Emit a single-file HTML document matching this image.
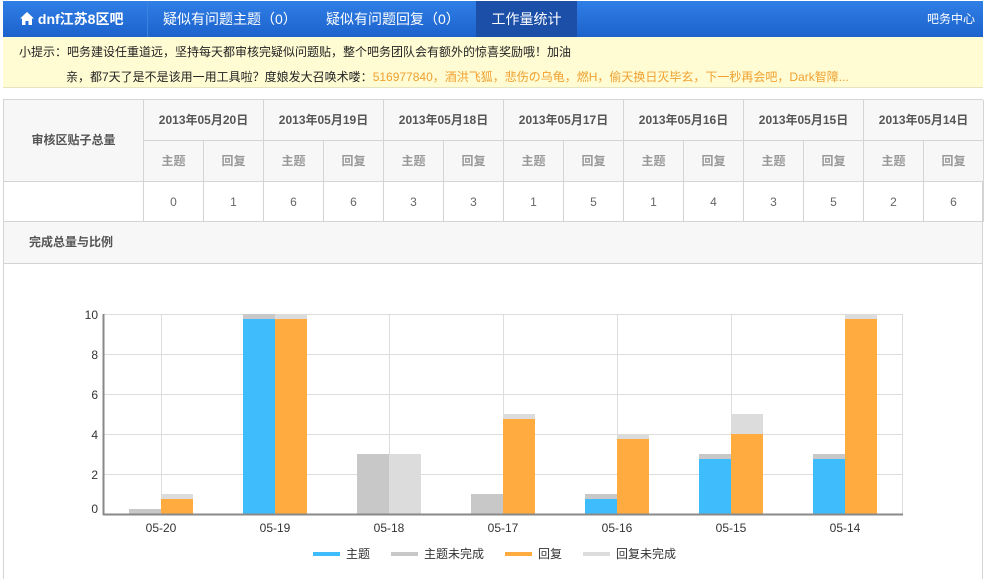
<!DOCTYPE html>
<html><head><meta charset="utf-8">
<style>
*{margin:0;padding:0;box-sizing:border-box}
body{width:985px;height:579px;background:#fff;font-family:"Liberation Sans","Noto Sans CJK SC",sans-serif;font-size:12px;color:#333;position:relative;overflow:hidden}
.nav{position:absolute;left:3px;top:1px;width:980px;height:36px;background:linear-gradient(#2f7fe6,#1d62cc);color:#fff}
.nav div{position:absolute;top:0;height:36px;line-height:36px;font-size:14px}
.tip{position:absolute;left:3px;top:37px;width:980px;height:51px;background:#fffcd3;border-bottom:1px solid #e6e3c0;font-size:12px;color:#222}
.tip p{position:absolute;white-space:nowrap}
.o{color:#f0a030}
.c{position:absolute;border-right:1px solid #d4d4d4;border-bottom:1px solid #d4d4d4;text-align:center;font-weight:bold;color:#555}
.g{background:#f7f7f7}
.n{font-weight:normal;color:#666}
</style></head><body>
<div class="nav">
<div style="left:0;width:145px;border-right:1px solid #3a84dc;font-weight:bold;padding-left:17px"><svg width="14" height="13" viewBox="0 0 14 13" style="vertical-align:-1px"><path d="M7 0L0 6.5h2V13h3.5V9h3v4H12V6.5h2z" fill="#fff"/></svg> dnf江苏8区吧</div>
<div style="left:160px">疑似有问题主题（0）</div>
<div style="left:323px">疑似有问题回复（0）</div>
<div style="left:473px;width:101px;background:#1b4fa8;text-align:center">工作量统计</div>
<div style="right:8px;font-size:12px">吧务中心</div>
</div>
<div class="tip">
<p style="left:16px;top:6px">小提示：吧务建设任重道远，坚持每天都审核完疑似问题贴，整个吧务团队会有额外的惊喜奖励哦！加油</p>
<p style="left:63px;top:31px">亲，都7天了是不是该用一用工具啦？度娘发大召唤术喽：<span class="o">516977840，酒洪飞狐，悲伤の乌龟，燃H，偷天换日灭毕玄，下一秒再会吧，Dark智障...</span></p>
</div>
<div style="position:absolute;left:3px;top:99px;width:980px;height:480px;border-left:1px solid #d4d4d4;border-top:1px solid #d4d4d4;border-right:1px solid #d4d4d4"></div>
<div class="c g" style="left:4px;top:100px;width:140px;height:82px;line-height:80px">审核区贴子总量</div>
<div id="t"></div>
<div class="c g" style="left:4px;top:222px;width:979px;height:42px;line-height:40px;text-align:left;padding-left:25px">完成总量与比例</div>
<div class="c" style="left:4px;top:182px;width:140px;height:40px"></div>
<script>
var d=["20","19","18","17","16","15","14"],v=[0,1,6,6,3,3,1,5,1,4,3,5,2,6],h="";
for(var i=0;i<7;i++){var x=144+i*120;
h+='<div class="c g" style="left:'+x+'px;top:100px;width:120px;height:41px;line-height:40px">2013年05月'+d[i]+'日</div>';
for(var j=0;j<2;j++){h+='<div class="c g" style="left:'+(x+j*60)+'px;top:141px;width:60px;height:41px;line-height:40px;color:#999">'+(j?'回复':'主题')+'</div>';
h+='<div class="c n" style="left:'+(x+j*60)+'px;top:182px;width:60px;height:40px;line-height:40px">'+v[i*2+j]+'</div>';}}
document.getElementById('t').innerHTML=h;
</script>
<svg style="position:absolute;left:0;top:0" width="985" height="579" font-family="Liberation Sans,sans-serif" font-size="12">
<g stroke="#ddd" stroke-width="1">
<line x1="103" y1="314.5" x2="903" y2="314.5"/><line x1="103" y1="354.5" x2="903" y2="354.5"/><line x1="103" y1="394.5" x2="903" y2="394.5"/><line x1="103" y1="434.5" x2="903" y2="434.5"/><line x1="103" y1="474.5" x2="903" y2="474.5"/>
<line x1="161.5" y1="314" x2="161.5" y2="514"/><line x1="275.5" y1="314" x2="275.5" y2="514"/><line x1="389.5" y1="314" x2="389.5" y2="514"/><line x1="503.5" y1="314" x2="503.5" y2="514"/><line x1="617.5" y1="314" x2="617.5" y2="514"/><line x1="731.5" y1="314" x2="731.5" y2="514"/><line x1="845.5" y1="314" x2="845.5" y2="514"/><line x1="902.5" y1="314" x2="902.5" y2="514"/>
</g>
<g>
<rect x="129" y="509" width="32" height="5" fill="#c8c8c8"/>
<rect x="161" y="494" width="32" height="5" fill="#dcdcdc"/><rect x="161" y="499" width="32" height="15" fill="#ffab3f"/>
<rect x="243" y="314" width="32" height="5" fill="#c8c8c8"/><rect x="243" y="319" width="32" height="195" fill="#3fbcfb"/>
<rect x="275" y="314" width="32" height="5" fill="#dcdcdc"/><rect x="275" y="319" width="32" height="195" fill="#ffab3f"/>
<rect x="357" y="454" width="32" height="60" fill="#c8c8c8"/><rect x="389" y="454" width="32" height="60" fill="#dcdcdc"/>
<rect x="471" y="494" width="32" height="20" fill="#c8c8c8"/>
<rect x="503" y="414" width="32" height="5" fill="#dcdcdc"/><rect x="503" y="419" width="32" height="95" fill="#ffab3f"/>
<rect x="585" y="494" width="32" height="5" fill="#c8c8c8"/><rect x="585" y="499" width="32" height="15" fill="#3fbcfb"/>
<rect x="617" y="434" width="32" height="5" fill="#dcdcdc"/><rect x="617" y="439" width="32" height="75" fill="#ffab3f"/>
<rect x="699" y="454" width="32" height="5" fill="#c8c8c8"/><rect x="699" y="459" width="32" height="55" fill="#3fbcfb"/>
<rect x="731" y="414" width="32" height="20" fill="#dcdcdc"/><rect x="731" y="434" width="32" height="80" fill="#ffab3f"/>
<rect x="813" y="454" width="32" height="5" fill="#c8c8c8"/><rect x="813" y="459" width="32" height="55" fill="#3fbcfb"/>
<rect x="845" y="314" width="32" height="5" fill="#dcdcdc"/><rect x="845" y="319" width="32" height="195" fill="#ffab3f"/>
</g>
<line x1="103.5" y1="314" x2="103.5" y2="515" stroke="#888" stroke-width="2"/>
<line x1="103" y1="514.5" x2="903" y2="514.5" stroke="#888" stroke-width="2"/>
<g fill="#333" text-anchor="end"><text x="98" y="319">10</text><text x="98" y="359">8</text><text x="98" y="399">6</text><text x="98" y="439">4</text><text x="98" y="479">2</text><text x="98" y="513">0</text></g>
<g fill="#333" text-anchor="middle"><text x="161" y="532">05-20</text><text x="275" y="532">05-19</text><text x="389" y="532">05-18</text><text x="503" y="532">05-17</text><text x="617" y="532">05-16</text><text x="731" y="532">05-15</text><text x="845" y="532">05-14</text></g>
<g font-family="Liberation Sans,Noto Sans CJK SC,sans-serif" fill="#333">
<rect x="313" y="552" width="27" height="4" fill="#3fbcfb"/><text x="346" y="558">主题</text>
<rect x="391" y="552" width="27" height="4" fill="#c8c8c8"/><text x="424" y="558">主题未完成</text>
<rect x="505" y="552" width="27" height="4" fill="#ffab3f"/><text x="538" y="558">回复</text>
<rect x="583" y="552" width="27" height="4" fill="#dcdcdc"/><text x="616" y="558">回复未完成</text>
</g>
</svg>
</body></html>
